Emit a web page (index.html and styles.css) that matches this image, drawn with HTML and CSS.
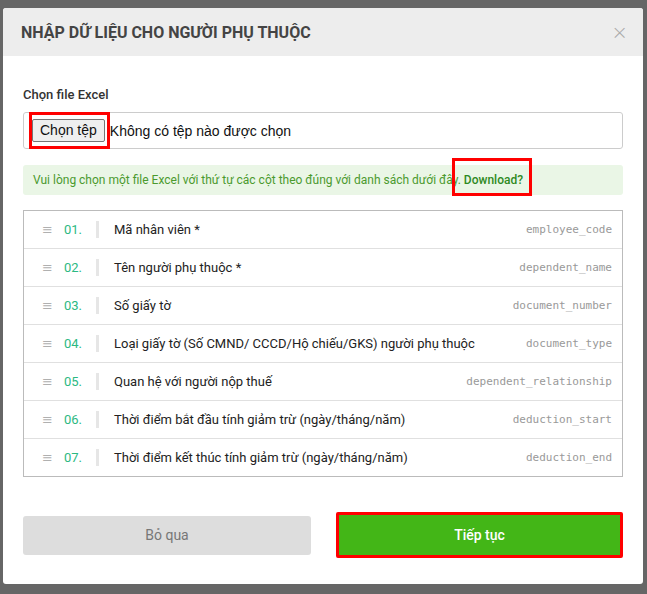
FILE: index.html
```html
<!DOCTYPE html>
<html lang="vi">
<head>
    <meta charset="UTF-8">
    <meta name="viewport" content="width=device-width, initial-scale=1.0">
    <title>Nhập dữ liệu cho người phụ thuộc</title>
    <link rel="stylesheet" href="styles.css">
</head>
<body>
    <div class="modal">
        <div class="modal-header">
            <h2 class="modal-title">NHẬP DỮ LIỆU CHO NGƯỜI PHỤ THUỘC</h2>
            <span class="close">&times;</span>
        </div>
        <div class="modal-body">
            <label class="field-label">Chọn file Excel</label>
            <div class="file-box">
                <span class="file-btn-wrap"><span class="file-btn">Chọn tệp</span></span>
                <span class="file-name">Không có tệp nào được chọn</span>
            </div>
            <div class="notice">
                Vui lòng chọn một file Excel với thứ tự các cột theo đúng với danh sách dưới đây.
                <a href="#" class="download">Download?</a>
            </div>
            <ul class="columns">
                <li class="col-row">
                    <span class="handle">&#8801;</span>
                    <span class="num">01.</span>
                    <span class="bar"></span>
                    <span class="name">Mã nhân viên *</span>
                    <span class="code">employee_code</span>
                </li>
                <li class="col-row">
                    <span class="handle">&#8801;</span>
                    <span class="num">02.</span>
                    <span class="bar"></span>
                    <span class="name">Tên người phụ thuộc *</span>
                    <span class="code">dependent_name</span>
                </li>
                <li class="col-row">
                    <span class="handle">&#8801;</span>
                    <span class="num">03.</span>
                    <span class="bar"></span>
                    <span class="name">Số giấy tờ</span>
                    <span class="code">document_number</span>
                </li>
                <li class="col-row">
                    <span class="handle">&#8801;</span>
                    <span class="num">04.</span>
                    <span class="bar"></span>
                    <span class="name">Loại giấy tờ (Số CMND/ CCCD/Hộ chiếu/GKS) người phụ thuộc</span>
                    <span class="code">document_type</span>
                </li>
                <li class="col-row">
                    <span class="handle">&#8801;</span>
                    <span class="num">05.</span>
                    <span class="bar"></span>
                    <span class="name">Quan hệ với người nộp thuế</span>
                    <span class="code">dependent_relationship</span>
                </li>
                <li class="col-row">
                    <span class="handle">&#8801;</span>
                    <span class="num">06.</span>
                    <span class="bar"></span>
                    <span class="name">Thời điểm bắt đầu tính giảm trừ (ngày/tháng/năm)</span>
                    <span class="code">deduction_start</span>
                </li>
                <li class="col-row">
                    <span class="handle">&#8801;</span>
                    <span class="num">07.</span>
                    <span class="bar"></span>
                    <span class="name">Thời điểm kết thúc tính giảm trừ (ngày/tháng/năm)</span>
                    <span class="code">deduction_end</span>
                </li>
            </ul>
        </div>
        <div class="modal-footer">
            <button class="btn btn-skip">Bỏ qua</button>
            <div class="btn-wrap"><button class="btn btn-next">Tiếp tục</button></div>
        </div>
    </div>
</body>
</html>
```

FILE: styles.css
```css
body {
    margin: 0;
    background: #666;
    font-family: Roboto, 'Noto Sans', sans-serif;
    color: #222;
    height: 594px;
    padding: 8px 4px 0 3px;
    box-sizing: border-box;
}

.modal {
    background: #fff;
    border-radius: 3px;
    height: 576px;
    display: flex;
    flex-direction: column;
    overflow: hidden;
}

.modal-header {
    background: #ededed;
    height: 48px;
    display: flex;
    align-items: center;
    justify-content: space-between;
    padding: 0 15px 0 18px;
}
.modal-title {
    margin: 0;
    font-size: 16px;
    font-weight: 700;
    color: #444;
    white-space: nowrap;
}
.close {
    font-size: 20px;
    color: #aaa;
    font-family: 'DejaVu Sans', sans-serif;
    font-weight: 300;
    line-height: 1;
}

.modal-body {
    padding: 0 20px;
}
.field-label {
    display: block;
    font-size: 13px;
    font-weight: 500;
    color: #333;
    margin-top: 31px;
    line-height: 16px;
}
.file-box {
    margin-top: 9px;
    height: 37px;
    border: 1px solid #ccc;
    border-radius: 3px;
    box-sizing: border-box;
    display: flex;
    align-items: center;
    font-family: 'Liberation Sans', Arial, sans-serif;
    font-size: 14px;
    color: #111;
}
.file-btn-wrap {
    margin-left: 5px;
    border: 3px solid #f00;
    height: 37px;
    box-sizing: border-box;
    display: flex;
    align-items: center;
    padding: 0 2px 0 0;
}
.file-btn {
    background: #efefef;
    border: 1px solid #767676;
    border-radius: 2px;
    padding: 2px 7px;
    font-size: 14px;
    line-height: 17px;
}
.file-name {
    margin-left: 0;
}

.notice {
    margin-top: 16px;
    height: 30px;
    background: #eaf6e6;
    border-radius: 3px;
    color: #4a9a2e;
    font-size: 12px;
    display: flex;
    align-items: center;
    padding-left: 10px;
}
.download {
    color: #2f8a1f;
    font-weight: 500;
    text-decoration: none;
    margin-left: 3px;
    position: relative;
}
.download::after {
    content: "";
    position: absolute;
    left: -12px;
    right: -9px;
    top: -15px;
    bottom: -9px;
    border: 3px solid #f00;
}

.columns {
    list-style: none;
    margin: 15px 0 0;
    padding: 0;
    border: 1px solid #bbb;
}
.col-row {
    display: flex;
    align-items: center;
    height: 38px;
    border-top: 1px solid #e0e0e0;
    box-sizing: border-box;
    padding: 0 10px 0 18px;
}
.col-row:first-child {
    border-top: none;
    height: 37px;
}
.handle {
    color: #b0b0b0;
    font-size: 13px;
    width: 22px;
    font-family: 'DejaVu Sans', sans-serif;
}
.num {
    color: #2cb982;
    font-size: 13px;
    width: 32px;
}
.bar {
    width: 3px;
    height: 17px;
    background: #e6e6e6;
}
.name {
    flex: 1;
    margin-left: 15px;
    font-size: 13px;
    color: #222;
    white-space: nowrap;
}
.code {
    font-family: 'DejaVu Sans Mono', monospace;
    font-size: 11px;
    color: #999;
}

.modal-footer {
    margin-top: auto;
    padding: 0 20px 26px;
    display: flex;
    gap: 25px;
    align-items: center;
}
.btn {
    height: 40px;
    border: none;
    border-radius: 3px;
    font-family: Roboto, sans-serif;
    font-size: 14px;
    cursor: pointer;
    width: 100%;
}
.btn-skip {
    flex: 0 0 288px;
    height: 39px;
    background: #ddd;
    color: #777;
}
.btn-wrap {
    flex: 1;
    border: 3px solid #f00;
    border-radius: 2px;
}
.btn-next {
    display: block;
    background: #43b617;
    color: #fff;
    border-radius: 0;
    font-weight: 500;
}
```
